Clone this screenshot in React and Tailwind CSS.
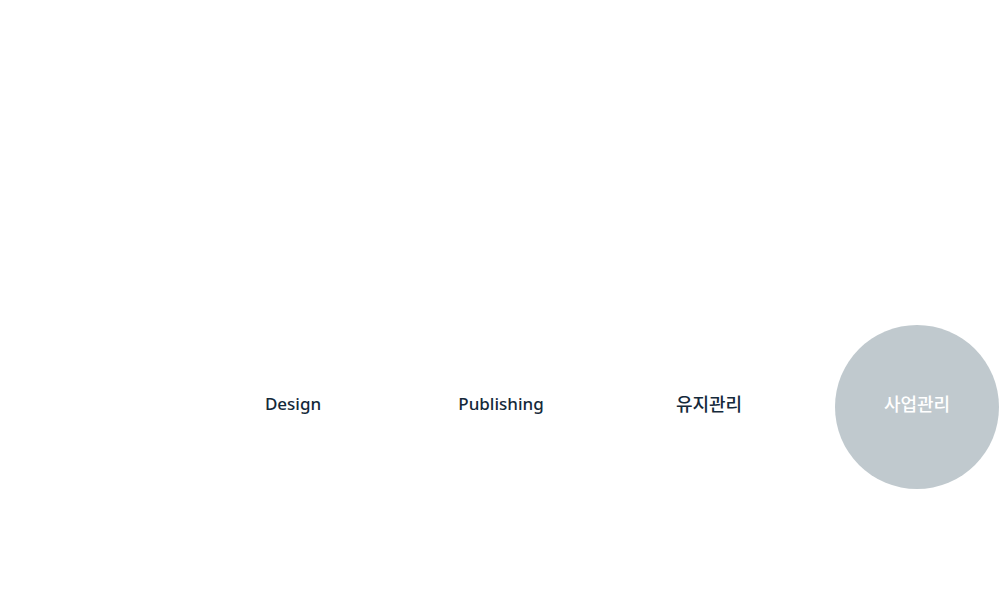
const items = [
  { label: 'Design', active: false, ko: false },
  { label: 'Publishing', active: false, ko: false },
  { label: '유지관리', active: false, ko: true },
  { label: '사업관리', active: true, ko: true },
];

export default function App() {
  return (
    <div
      className="w-full h-[593px] bg-white overflow-hidden pt-[325px]"
      style={{ fontFamily: '"Noto Sans", "Noto Sans CJK KR", sans-serif' }}
    >
      <ul className="flex pl-[189px]">
        {items.map((item) => (
          <li key={item.label} className="w-[208px] shrink-0 flex justify-center">
            <div
              className={`w-[164px] h-[164px] rounded-full flex items-center justify-center font-medium leading-none pb-[7px] ${
                item.ko ? 'text-[18px]' : 'text-[17px]'
              } ${item.active ? 'bg-[#c0c9ce] text-white' : 'text-[#14293a]'}`}
            >
              {item.label}
            </div>
          </li>
        ))}
      </ul>
    </div>
  );
}
